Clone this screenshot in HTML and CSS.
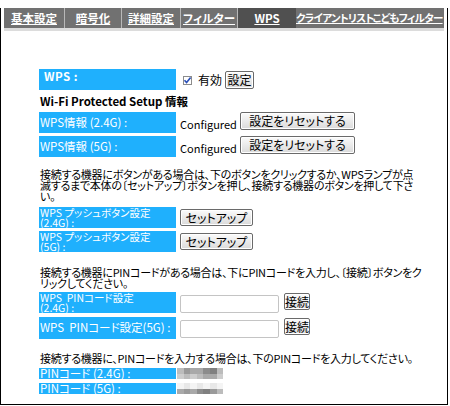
FILE: index.html
```html
<!DOCTYPE html>
<html lang="ja">
<head>
<meta charset="utf-8">
<title>WPS</title>
<link rel="stylesheet" href="styles.css">
</head>
<body>
<div class="frame">
  <nav class="tabs">
    <a class="tab w60">基本設定</a><span class="sep"></span>
    <a class="tab w56">暗号化</a><span class="sep"></span>
    <a class="tab w58">詳細設定</a><span class="sep"></span>
    <a class="tab w56">フィルター</a><span class="sep"></span>
    <a class="tab w58 active">WPS</a>
    <a class="tab w76 narrow">クライアントリスト</a>
    <a class="tab w71 narrow">こどもフィルター</a>
  </nav>
  <div class="content">
    <div class="row r-first">
      <div class="label label-top">WPS :</div>
      <div class="val val-center">
        <span class="cb"><svg width="9" height="9" viewBox="0 0 9 9"><path d="M1.5 4.2 L3.6 6.6 L7.6 1.6" fill="none" stroke="#2a4fb8" stroke-width="1.6"/></svg></span>
        <span class="cb-text">有効</span>
        <button class="btn btn-set">設定</button>
      </div>
    </div>
    <div class="heading">Wi-Fi Protected Setup 情報</div>
    <div class="row r-gap">
      <div class="label">WPS情報 (2.4G) :</div>
      <div class="val">
        <span class="status">Configured</span>
        <button class="btn btn-reset">設定をリセットする</button>
      </div>
    </div>
    <div class="row r-gap">
      <div class="label">WPS情報 (5G) :</div>
      <div class="val">
        <span class="status">Configured</span>
        <button class="btn btn-reset">設定をリセットする</button>
      </div>
    </div>
    <p class="note note1">接続する機器にボタンがある場合は、下のボタンをクリックするか、WPSランプが点<br>滅するまで本体の〔セットアップ〕ボタンを押し、接続する機器のボタンを押して下さ<br>い。</p>
    <div class="row r-push1">
      <div class="label label-two"><span class="ln">WPS プッシュボタン設定</span><span class="ln">(2.4G) :</span></div>
      <div class="val val-center"><button class="btn btn-setup">セットアップ</button></div>
    </div>
    <div class="row r-gap">
      <div class="label label-two"><span class="ln">WPS プッシュボタン設定</span><span class="ln">(5G) :</span></div>
      <div class="val val-center"><button class="btn btn-setup">セットアップ</button></div>
    </div>
    <p class="note note2">接続する機器にPINコードがある場合は、下にPINコードを入力し、〔接続〕ボタンをク<br>リックしてください。</p>
    <div class="row r-pin1">
      <div class="label label-two"><span class="ln">WPS&nbsp; PINコード設定</span><span class="ln">(2.4G) :</span></div>
      <div class="val">
        <input class="pin-input" type="text">
        <button class="btn btn-conn">接続</button>
      </div>
    </div>
    <div class="row r-pin2">
      <div class="label">WPS&nbsp; PINコード設定(5G) :</div>
      <div class="val">
        <input class="pin-input" type="text">
        <button class="btn btn-conn">接続</button>
      </div>
    </div>
    <p class="note note3">接続する機器に、PINコードを入力する場合は、下のPINコードを入力してください。</p>
    <div class="row r-code1">
      <div class="label label-small">PINコード (2.4G) :</div>
      <div class="val">
        <div class="blur">
          <i class="g3"></i><i class="g5"></i><i class="g4"></i><i class="g4"></i><i class="g6"></i><i class="g7"></i><i class="g3"></i>
          <i class="g2"></i><i class="g3"></i><i class="g2"></i><i class="g3"></i><i class="g4"></i><i class="g4"></i><i class="g2"></i>
        </div>
      </div>
    </div>
    <div class="row r-code2">
      <div class="label label-small">PINコード (5G) :</div>
      <div class="val">
        <div class="blur">
          <i class="g0"></i><i class="g1"></i><i class="g0"></i><i class="g1"></i><i class="g0"></i><i class="g1"></i><i class="g0"></i>
          <i class="g4"></i><i class="g5"></i><i class="g4"></i><i class="g6"></i><i class="g7"></i><i class="g5"></i><i class="g3"></i>
        </div>
      </div>
    </div>
  </div>
</div>
</body>
</html>
```
FILE: styles.css
```css
* { box-sizing: border-box; }

body {
  margin: 0;
  background: #fff;
  color: #000;
  font-family: "Noto Sans CJK JP", sans-serif;
  font-size: 12px;
  font-feature-settings: "palt" 1;
}

.frame {
  margin-top: 8px;
  width: 448px;
  height: 397px;
  border: 1px solid #000;
  border-top: none;
}

.tabs {
  display: flex;
  margin: 0 3px;
  height: 23px;
  background: #717171;
  border-bottom: 3px solid #dcdcdc;
}

.tab {
  display: block;
  height: 20px;
  line-height: 20px;
  text-align: center;
  color: #fff;
  font-weight: bold;
  font-size: 11.5px;
  text-decoration: underline;
  white-space: nowrap;
}

.tab.narrow { font-size: 10.5px; letter-spacing: -0.7px; }
.tab.active { background: #505050; }

.w56 { width: 56px; }
.w58 { width: 58px; }
.w60 { width: 60px; }
.w71 { width: 71px; }
.w76 { width: 76px; }

.sep {
  width: 1px;
  height: 20px;
  background: #b8b8b8;
}

.content {
  padding-left: 38px;
}

.row {
  display: grid;
  grid-template-columns: 137px 1fr;
  column-gap: 4px;
  height: 21px;
}

.r-first { margin-top: 38px; }
.r-gap { margin-top: 3px; }
.r-push1 { margin-top: 5px; }
.r-pin1 { margin-top: 3px; }
.r-pin2 { margin-top: 4px; height: 22px; }
.r-code1 { margin-top: 4px; height: 11px; }
.r-code2 { margin-top: 4px; height: 11px; }

.label {
  background: #1fb0fd;
  color: #fff;
  padding-left: 1px;
  line-height: 21px;
  font-size: 11.5px;
  white-space: nowrap;
}

.label-top {
  font-weight: bold;
  padding-left: 5px;
  line-height: 14px;
  letter-spacing: 0.5px;
}

.label-two {
  display: flex;
  flex-direction: column;
  justify-content: center;
  font-size: 10.5px;
  line-height: 10px;
}

.ln {
  display: block;
  height: 10px;
  line-height: 10px;
}

.label-small {
  line-height: 11px;
}

.val {
  display: flex;
  align-items: flex-start;
}

.val-center { align-items: center; }

.heading {
  margin-top: 4px;
  height: 15px;
  line-height: 15px;
  font-weight: bold;
  font-size: 11.5px;
  padding-left: 1px;
}

.status {
  margin-top: 5px;
  line-height: 14px;
  font-size: 11px;
  width: 60px;
}

.cb {
  display: inline-block;
  width: 9px;
  height: 9px;
  border: 1px solid #8c8c8c;
  background: #fff;
  margin-left: 3px;
  margin-top: 2px;
  line-height: 0;
}

.cb svg { display: block; margin: -1px 0 0 -1px; }

.cb-text {
  margin-left: 6px;
  margin-right: 3px;
  line-height: 14px;
}

.btn {
  font-family: "Noto Sans CJK JP", sans-serif;
  font-feature-settings: "palt" 1;
  font-size: 12px;
  color: #000;
  padding: 0;
  height: 18px;
  line-height: 14px;
  background: linear-gradient(#fbfbfb, #dadada);
  border: 1px solid #6a6a6a;
  border-radius: 2px;
  box-shadow: inset 0 0 0 1px #fff;
}

.btn-set { width: 29px; }
.btn-reset { width: 115px; }
.btn-setup { width: 73px; height: 17px; }
.btn-conn { width: 26px; height: 17px; margin-left: 5px; margin-top: 1px; }

.note {
  margin: 0;
  font-size: 11px;
  letter-spacing: -0.25px;
  line-height: 11px;
  padding-left: 1px;
  white-space: nowrap;
}

.note1 { margin-top: 12px; }
.note2 { margin-top: 15px; }
.note3 { margin-top: 13px; line-height: 12px; }

.pin-input {
  width: 99px;
  height: 18px;
  margin-top: 3px;
  border: 1px solid #c4c4c4;
  border-radius: 2px;
  background: #fff;
  padding: 0;
}

.blur {
  display: grid;
  grid-template-columns: repeat(7, 6.6px);
  grid-template-rows: 5.5px 5.5px;
  margin-left: -3px;
}

.blur i { display: block; }

.g0 { background: #f4f4f4; }
.g1 { background: #e8e8e8; }
.g2 { background: #cdcdcd; }
.g3 { background: #bcbcbc; }
.g4 { background: #a9a9a9; }
.g5 { background: #9a9a9a; }
.g6 { background: #8c8c8c; }
.g7 { background: #808080; }
```
